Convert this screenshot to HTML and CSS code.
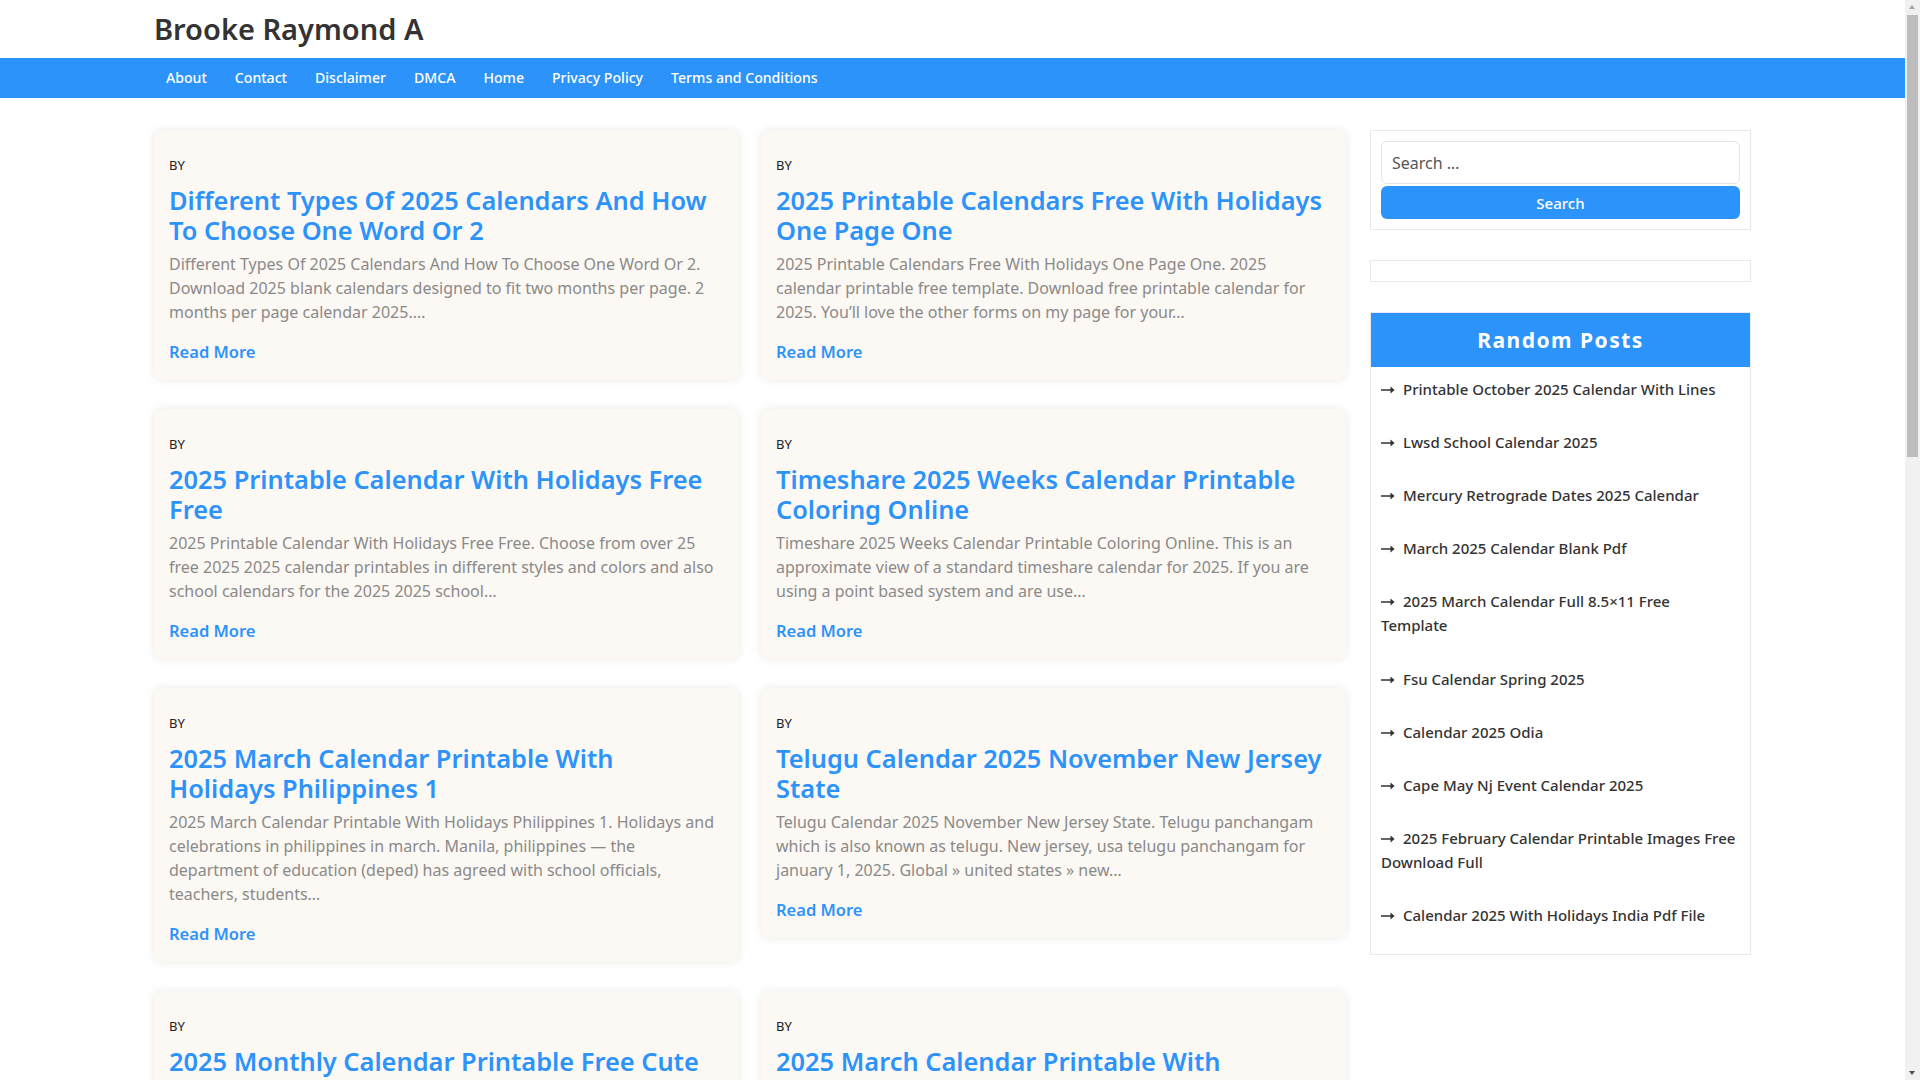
FILE: index.html
```html
<!DOCTYPE html>
<html lang="en">
<head>
    <meta charset="UTF-8">
    <meta name="viewport" content="width=device-width, initial-scale=1.0">
    <link rel="stylesheet" href="styles.css">
    <title>Brooke Raymond A</title>
</head>
<body>
<header class="site-header">
    <div class="container">
        <a class="site-title" href="#">Brooke Raymond A</a>
    </div>
</header>
<nav class="main-nav">
    <div class="container">
        <ul class="menu">
            <li><a href="#">About</a></li>
            <li><a href="#">Contact</a></li>
            <li><a href="#">Disclaimer</a></li>
            <li><a href="#">DMCA</a></li>
            <li><a href="#">Home</a></li>
            <li><a href="#">Privacy Policy</a></li>
            <li><a href="#">Terms and Conditions</a></li>
        </ul>
    </div>
</nav>

<div class="container content">
    <main class="posts">
        <article class="card">
            <div class="byline">BY</div>
            <h2 class="card-title"><a href="#">Different Types Of 2025 Calendars And How To Choose One Word Or 2</a></h2>
            <p class="excerpt">Different Types Of 2025 Calendars And How To Choose One Word Or 2. Download 2025 blank calendars designed to fit two months per page. 2 months per page calendar 2025.…</p>
            <a class="read-more" href="#">Read More</a>
        </article>
        <article class="card">
            <div class="byline">BY</div>
            <h2 class="card-title"><a href="#">2025 Printable Calendars Free With Holidays One Page One</a></h2>
            <p class="excerpt">2025 Printable Calendars Free With Holidays One Page One. 2025 calendar printable free template. Download free printable calendar for 2025. You’ll love the other forms on my page for your…</p>
            <a class="read-more" href="#">Read More</a>
        </article>
        <article class="card">
            <div class="byline">BY</div>
            <h2 class="card-title"><a href="#">2025 Printable Calendar With Holidays Free Free</a></h2>
            <p class="excerpt">2025 Printable Calendar With Holidays Free Free. Choose from over 25 free 2025 2025 calendar printables in different styles and colors and also school calendars for the 2025 2025 school…</p>
            <a class="read-more" href="#">Read More</a>
        </article>
        <article class="card">
            <div class="byline">BY</div>
            <h2 class="card-title"><a href="#">Timeshare 2025 Weeks Calendar Printable Coloring Online</a></h2>
            <p class="excerpt">Timeshare 2025 Weeks Calendar Printable Coloring Online. This is an approximate view of a standard timeshare calendar for 2025. If you are using a point based system and are use…</p>
            <a class="read-more" href="#">Read More</a>
        </article>
        <article class="card">
            <div class="byline">BY</div>
            <h2 class="card-title"><a href="#">2025 March Calendar Printable With Holidays Philippines 1</a></h2>
            <p class="excerpt">2025 March Calendar Printable With Holidays Philippines 1. Holidays and celebrations in philippines in march. Manila, philippines — the department of education (deped) has agreed with school officials, teachers, students…</p>
            <a class="read-more" href="#">Read More</a>
        </article>
        <article class="card">
            <div class="byline">BY</div>
            <h2 class="card-title"><a href="#">Telugu Calendar 2025 November New Jersey State</a></h2>
            <p class="excerpt">Telugu Calendar 2025 November New Jersey State. Telugu panchangam which is also known as telugu. New jersey, usa telugu panchangam for january 1, 2025. Global » united states » new…</p>
            <a class="read-more" href="#">Read More</a>
        </article>
        <article class="card">
            <div class="byline">BY</div>
            <h2 class="card-title"><a href="#">2025 Monthly Calendar Printable Free Cute Designs</a></h2>
            <p class="excerpt">2025 Monthly Calendar Printable Free Cute Designs. Free monthly calendar printables for 2025 in cute designs and colors…</p>
            <a class="read-more" href="#">Read More</a>
        </article>
        <article class="card">
            <div class="byline">BY</div>
            <h2 class="card-title"><a href="#">2025 March Calendar Printable With Holidays</a></h2>
            <p class="excerpt">2025 March Calendar Printable With Holidays. Download the march 2025 calendar with holidays in pdf and image format…</p>
            <a class="read-more" href="#">Read More</a>
        </article>
    </main>

    <aside class="sidebar">
        <div class="widget search-widget">
            <input class="search-field" type="search" placeholder="Search …">
            <button class="search-submit">Search</button>
        </div>
        <div class="widget empty-widget"></div>
        <div class="widget random-posts">
            <h3 class="widget-title">Random Posts</h3>
            <ul class="post-list">
                <li><svg class="arrow" viewBox="0 0 14 8"><path d="M0 3.2h9.5V0.6L13.6 4 9.5 7.4V4.8H0z"/></svg><a href="#">Printable October 2025 Calendar With Lines</a></li>
                <li><svg class="arrow" viewBox="0 0 14 8"><path d="M0 3.2h9.5V0.6L13.6 4 9.5 7.4V4.8H0z"/></svg><a href="#">Lwsd School Calendar 2025</a></li>
                <li><svg class="arrow" viewBox="0 0 14 8"><path d="M0 3.2h9.5V0.6L13.6 4 9.5 7.4V4.8H0z"/></svg><a href="#">Mercury Retrograde Dates 2025 Calendar</a></li>
                <li><svg class="arrow" viewBox="0 0 14 8"><path d="M0 3.2h9.5V0.6L13.6 4 9.5 7.4V4.8H0z"/></svg><a href="#">March 2025 Calendar Blank Pdf</a></li>
                <li><svg class="arrow" viewBox="0 0 14 8"><path d="M0 3.2h9.5V0.6L13.6 4 9.5 7.4V4.8H0z"/></svg><a href="#">2025 March Calendar Full 8.5×11 Free Template</a></li>
                <li><svg class="arrow" viewBox="0 0 14 8"><path d="M0 3.2h9.5V0.6L13.6 4 9.5 7.4V4.8H0z"/></svg><a href="#">Fsu Calendar Spring 2025</a></li>
                <li><svg class="arrow" viewBox="0 0 14 8"><path d="M0 3.2h9.5V0.6L13.6 4 9.5 7.4V4.8H0z"/></svg><a href="#">Calendar 2025 Odia</a></li>
                <li><svg class="arrow" viewBox="0 0 14 8"><path d="M0 3.2h9.5V0.6L13.6 4 9.5 7.4V4.8H0z"/></svg><a href="#">Cape May Nj Event Calendar 2025</a></li>
                <li><svg class="arrow" viewBox="0 0 14 8"><path d="M0 3.2h9.5V0.6L13.6 4 9.5 7.4V4.8H0z"/></svg><a href="#">2025 February Calendar Printable Images Free Download Full</a></li>
                <li><svg class="arrow" viewBox="0 0 14 8"><path d="M0 3.2h9.5V0.6L13.6 4 9.5 7.4V4.8H0z"/></svg><a href="#">Calendar 2025 With Holidays India Pdf File</a></li>
            </ul>
        </div>
    </aside>
</div>

<div class="scrollbar">
    <span class="scroll-up"></span>
    <div class="scroll-thumb"></div>
    <span class="scroll-down"></span>
</div>
</body>
</html>
```

FILE: styles.css
```css
body {
    margin: 0;
    padding-right: 15px;
    font-family: "Noto Sans", "Open Sans", Arial, sans-serif;
    background-color: #fff;
    color: #333;
}

a {
    text-decoration: none;
}

.container {
    width: 1597px;
    margin: 0 auto;
}

/* header */

.site-header {
    height: 58px;
    display: flex;
    align-items: center;
}

.site-title {
    font-size: 29px;
    font-weight: 600;
    color: #333;
    line-height: 1;
}

.main-nav {
    background-color: #2c93fa;
    height: 40px;
}

.menu {
    list-style: none;
    margin: 0;
    padding: 0;
    display: flex;
    height: 40px;
    align-items: center;
}

.menu li a {
    display: block;
    color: #fff;
    font-size: 14.1px;
    font-weight: 500;
    padding: 0 14px;
    line-height: 40px;
}

.menu li:first-child a {
    padding-left: 12px;
}

/* content */

.content {
    display: grid;
    grid-template-columns: 1192px 381px;
    column-gap: 24px;
    margin-top: 32px;
    align-items: start;
}

.posts {
    display: grid;
    grid-template-columns: 1fr 1fr;
    column-gap: 22px;
    row-gap: 29px;
    align-items: start;
}

.card {
    background-color: #fcf8f3;
    border-radius: 8px;
    box-shadow: 0 0 10px rgba(0, 0, 0, 0.09);
    padding: 26px 15px 16px;
}

.byline {
    font-size: 13px;
    line-height: 18px;
    color: #222;
    margin-bottom: 11px;
}

.card-title {
    margin: 0 0 7px;
    font-size: 25.4px;
    line-height: 30px;
    font-weight: 600;
}

.card-title a {
    color: #2c93fa;
}

.excerpt {
    margin: 0 0 16px;
    font-size: 16px;
    line-height: 24px;
    color: #8a8a8a;
}

.read-more {
    display: inline-block;
    font-size: 16.5px;
    line-height: 24px;
    font-weight: 600;
    color: #2c93fa;
}

/* sidebar */

.widget {
    border: 1px solid #e6e8f2;
    background-color: #fff;
    margin-bottom: 30px;
}

.search-widget {
    padding: 10px;
}

.search-field {
    display: block;
    width: 100%;
    box-sizing: border-box;
    height: 43px;
    border: 1px solid #e3e5ee;
    border-radius: 6px;
    padding: 0 10px;
    font-family: inherit;
    font-size: 16px;
    color: #555;
    outline: none;
}

.search-field::placeholder {
    color: #555;
}

.search-submit {
    display: block;
    width: 100%;
    height: 33px;
    margin-top: 2px;
    border: none;
    border-radius: 6px;
    background-color: #2c93fa;
    color: #fff;
    font-family: inherit;
    font-weight: 500;
    font-size: 15px;
    cursor: pointer;
}

.empty-widget {
    height: 20px;
}

.widget-title {
    margin: 0;
    background-color: #2c93fa;
    color: #fff;
    text-align: center;
    font-size: 21px;
    letter-spacing: 1.5px;
    line-height: 54px;
    font-weight: bold;
}

.post-list {
    list-style: none;
    margin: -5px 0 0;
    padding: 0 10px 12px;
}

.post-list li {
    padding: 14.6px 0;
    font-size: 15px;
    font-weight: 500;
    line-height: 24px;
}

.post-list li a {
    color: #333;
}

.arrow {
    width: 14px;
    height: 8px;
    fill: #333;
    margin-right: 8px;
    vertical-align: 1px;
}

/* fake browser scrollbar */

.scrollbar {
    position: fixed;
    top: 0;
    right: 0;
    width: 15px;
    height: 100%;
    background-color: #f1f1f1;
}

.scroll-thumb {
    position: absolute;
    top: 15px;
    left: 2px;
    width: 11px;
    height: 442px;
    background-color: #bdbdbd;
}

.scroll-up,
.scroll-down {
    position: absolute;
    left: 4px;
    width: 0;
    height: 0;
    border-left: 3.5px solid transparent;
    border-right: 3.5px solid transparent;
}

.scroll-up {
    top: 5px;
    border-bottom: 4px solid #a3a3a3;
}

.scroll-down {
    bottom: 5px;
    border-top: 4px solid #505050;
}
```
